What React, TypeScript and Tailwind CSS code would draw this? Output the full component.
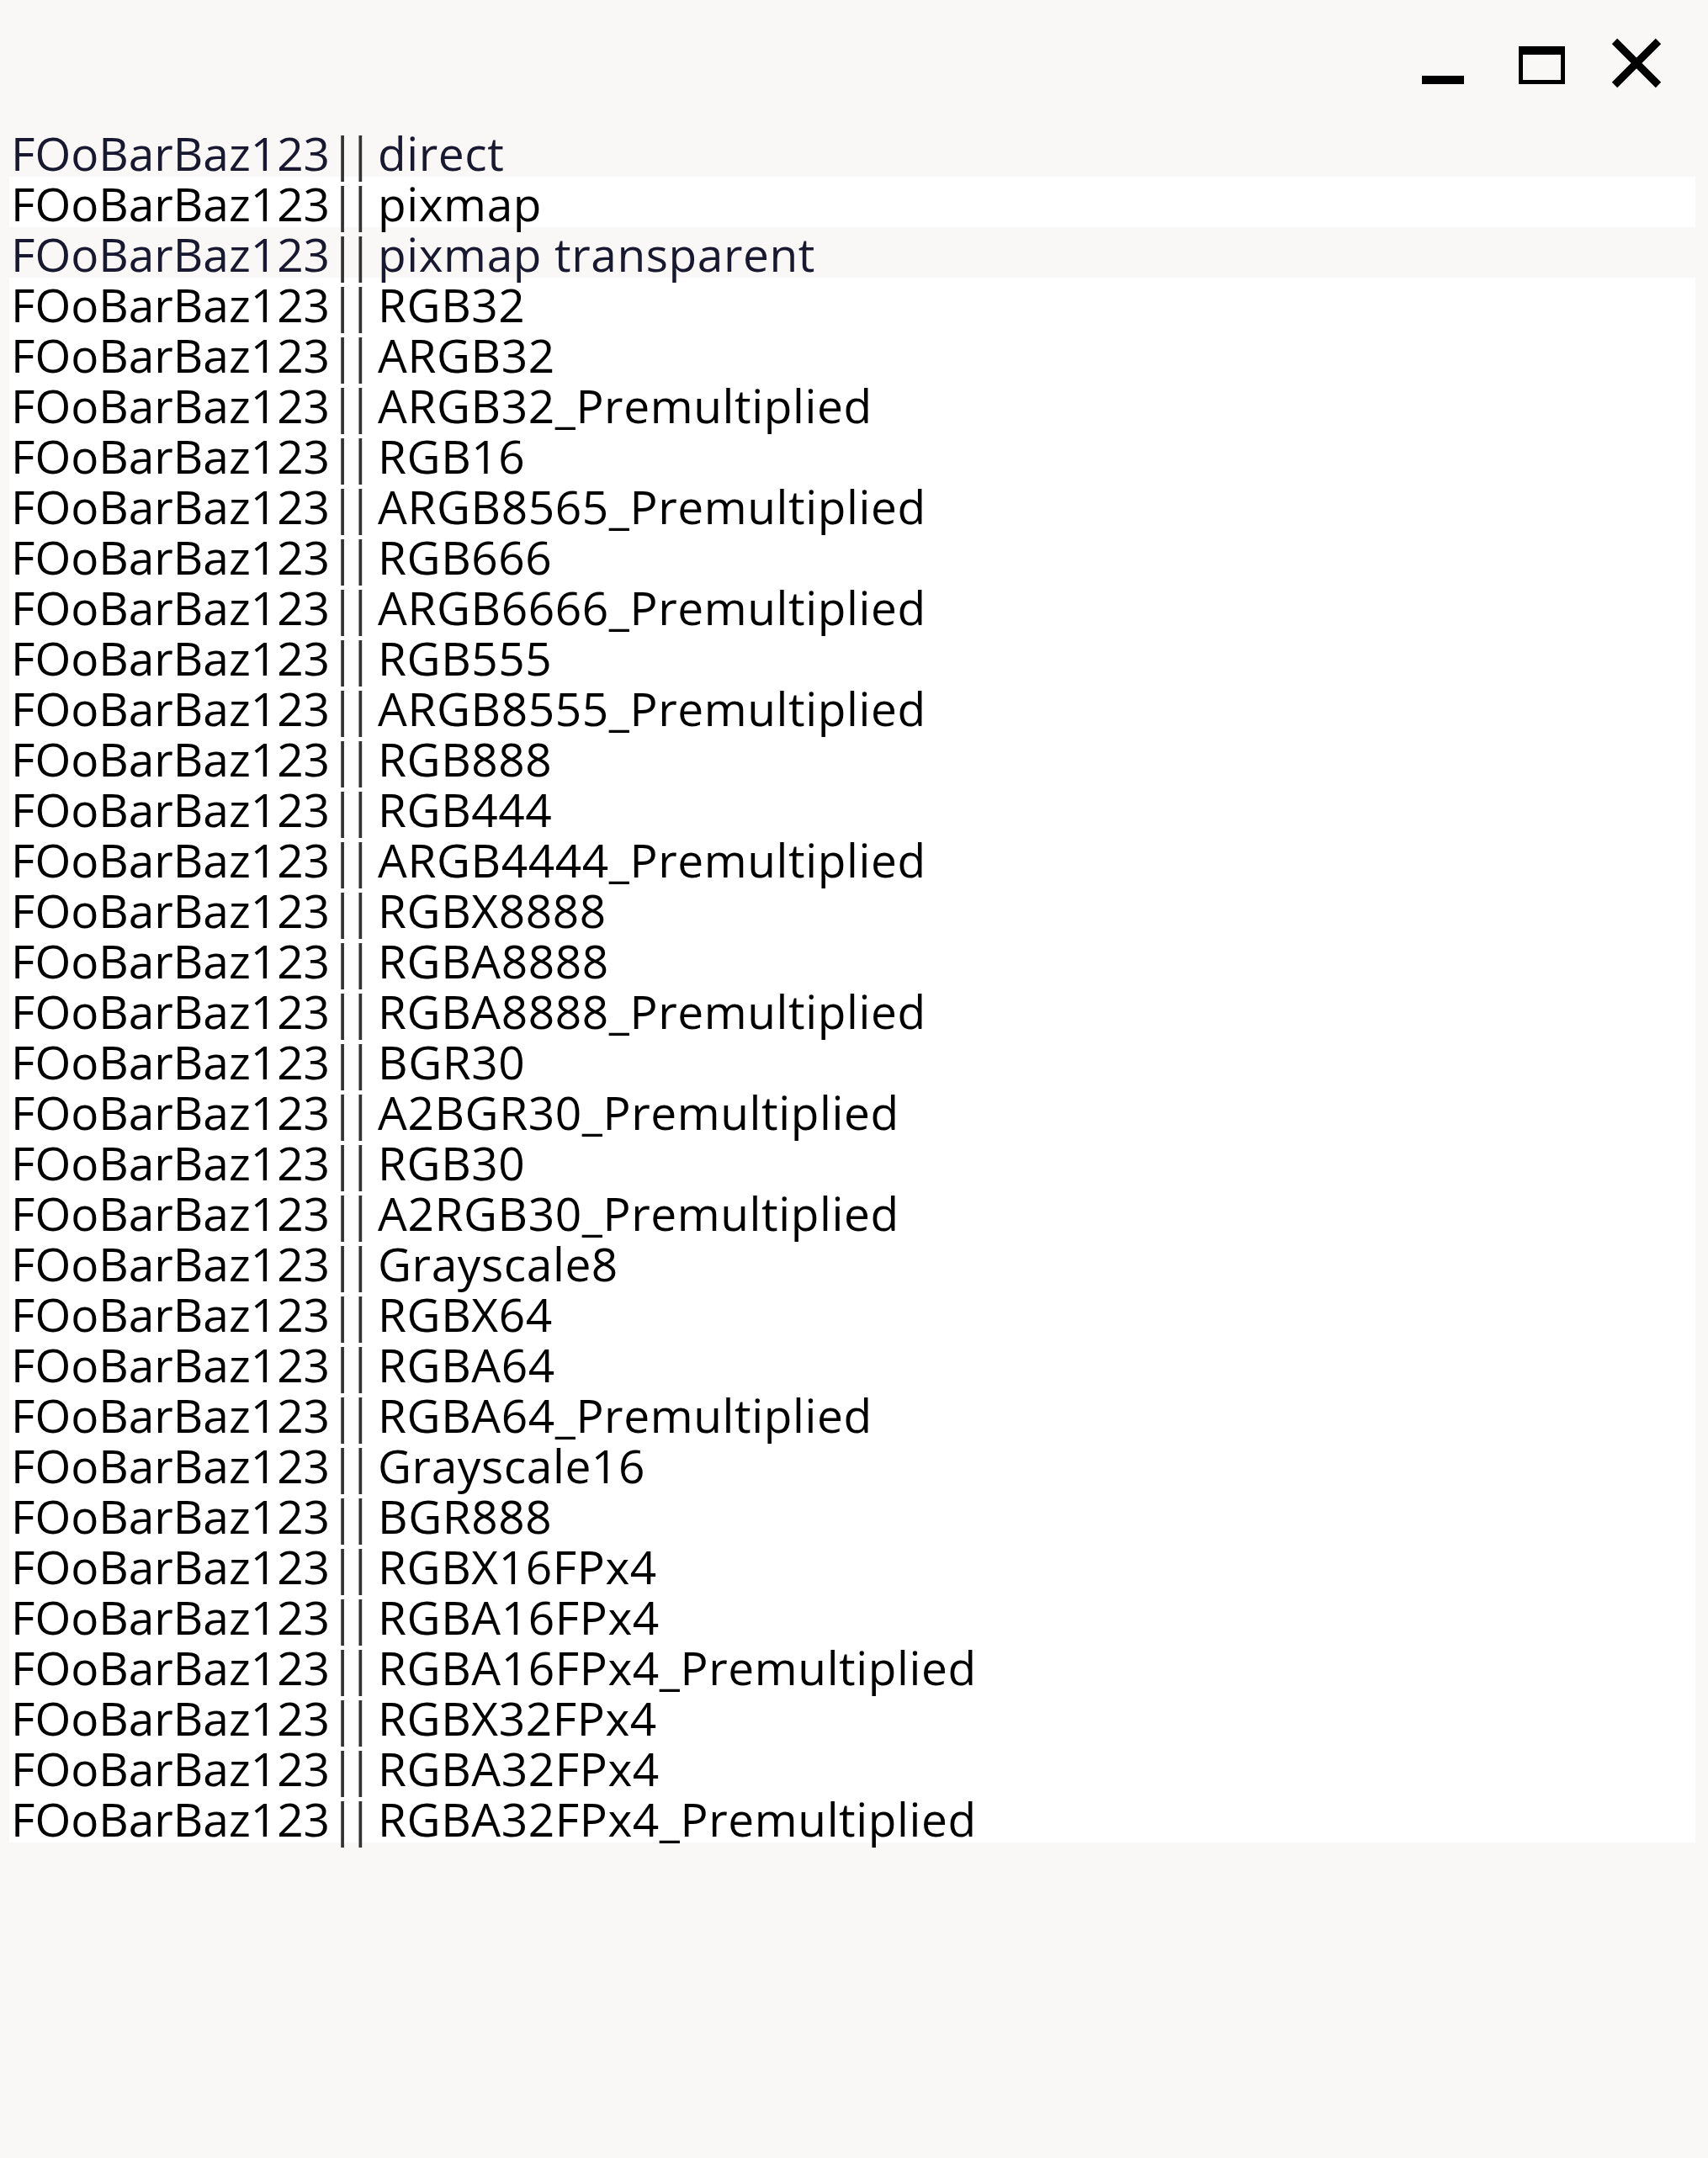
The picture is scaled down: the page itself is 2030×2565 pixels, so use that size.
import React from 'react'

const formats = [
  'direct',
  'pixmap',
  'pixmap transparent',
  'RGB32',
  'ARGB32',
  'ARGB32_Premultiplied',
  'RGB16',
  'ARGB8565_Premultiplied',
  'RGB666',
  'ARGB6666_Premultiplied',
  'RGB555',
  'ARGB8555_Premultiplied',
  'RGB888',
  'RGB444',
  'ARGB4444_Premultiplied',
  'RGBX8888',
  'RGBA8888',
  'RGBA8888_Premultiplied',
  'BGR30',
  'A2BGR30_Premultiplied',
  'RGB30',
  'A2RGB30_Premultiplied',
  'Grayscale8',
  'RGBX64',
  'RGBA64',
  'RGBA64_Premultiplied',
  'Grayscale16',
  'BGR888',
  'RGBX16FPx4',
  'RGBA16FPx4',
  'RGBA16FPx4_Premultiplied',
  'RGBX32FPx4',
  'RGBA32FPx4',
  'RGBA32FPx4_Premultiplied',
]

// rows drawn without a backing fill show the window colour through
const transparentRows = new Set(['direct', 'pixmap transparent'])

const WindowControls = () => (
  <div className="flex items-start gap-[55px] pt-[45px] pr-[55px]">
    {/* minimize */}
    <svg width="60" height="60" viewBox="0 0 60 60" aria-label="Minimize">
      <rect x="5" y="45" width="50" height="10" fill="#000" />
    </svg>
    {/* maximize */}
    <svg width="60" height="60" viewBox="0 0 60 60" aria-label="Maximize">
      <path
        d="M5 10h55v45H5z M10 20v30h45V20z"
        fill="#000"
        fillRule="evenodd"
      />
    </svg>
    {/* close */}
    <svg width="60" height="60" viewBox="0 0 60 60" aria-label="Close">
      <path d="M4 4L56 56M56 4L4 56" stroke="#000" strokeWidth="9" />
    </svg>
  </div>
)

const FormatRow = ({ name }: { name: string }) => {
  const isTransparent = transparentRows.has(name)
  return (
    <div
      className={
        isTransparent
          ? 'h-[60px] pt-[3px] pl-[2px] whitespace-nowrap leading-[57px] text-[#181830]'
          : 'h-[60px] pt-[3px] pl-[2px] whitespace-nowrap leading-[57px] bg-white text-black'
      }
    >
      {/* text sits above the next row's fill so descenders aren't cut */}
      <span className="relative z-10 inline-block w-[379px]">FOoBarBaz123</span>
      <span className="relative z-10 inline-block w-[40px] tracking-[-9px] text-[#333]">||</span>
      <span className="relative z-10 ml-[17px] tracking-[0.6px]">{name}</span>
    </div>
  )
}

export default function App() {
  return (
    <div className="w-[2030px] min-h-[2565px] bg-[#f9f8f6] font-['Open_Sans',sans-serif] text-[55px]">
      <div className="flex h-[150px] justify-end">
        <WindowControls />
      </div>
      <div className="ml-[11px] mr-[15px] flex flex-col">
        {formats.map((f) => (
          <FormatRow key={f} name={f} />
        ))}
      </div>
    </div>
  )
}
